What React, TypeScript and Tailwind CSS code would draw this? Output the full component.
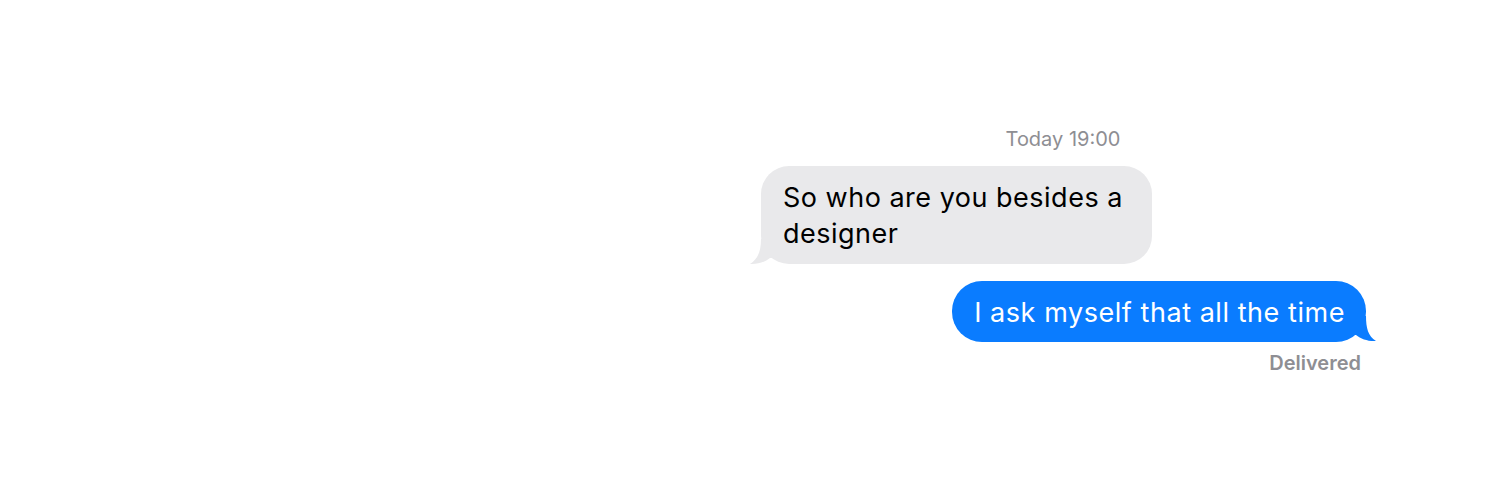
export default function App() {
  return (
    <div className="w-[1500px] h-[500px] bg-white font-['Inter',sans-serif]">
      <div className="ml-[750px] w-[626px] pt-[127px] flex flex-col">
        {/* timestamp */}
        <div className="text-center text-[20px] leading-[24px] text-[#8e8e93]">Today 19:00</div>

        {/* incoming */}
        <div className="mt-[15px] flex">
          <div className="relative ml-[11px] w-[391px] rounded-[28px] bg-[#e9e9eb] pl-[22px] pr-[20px] pt-[14px] pb-[12px] text-[27px] tracking-[0.5px] leading-[36px] text-black">
            So who are you besides a designer
            <svg className="absolute left-[-11px] bottom-[-1px]" width="30" height="26" viewBox="0 0 30 26">
              <path d="M11 0 C11 12 8 20 0 25 C8 25.5 15 23 20 19 L30 19 L30 0 Z" fill="#e9e9eb" />
            </svg>
          </div>
        </div>

        {/* outgoing */}
        <div className="mt-[17px] flex justify-end">
          <div className="relative mr-[10px] rounded-[30px] bg-[#0a7cff] pl-[22px] pr-[21px] pt-[13px] pb-[11px] text-[27px] tracking-[0.55px] leading-[37px] text-white">
            I ask myself that all the time
            <svg className="absolute right-[-10px] bottom-0" width="30" height="26" viewBox="0 0 30 26">
              <path d="M20 0 C20 12 22 20 30 25 C22 25.5 15 23 10 19 L0 19 L0 0 Z" fill="#0a7cff" />
            </svg>
          </div>
        </div>

        <div className="mt-[7px] pr-[15px] text-right text-[20px] leading-[28px] font-semibold text-[#8e8e93]">Delivered</div>
      </div>
    </div>
  );
}
